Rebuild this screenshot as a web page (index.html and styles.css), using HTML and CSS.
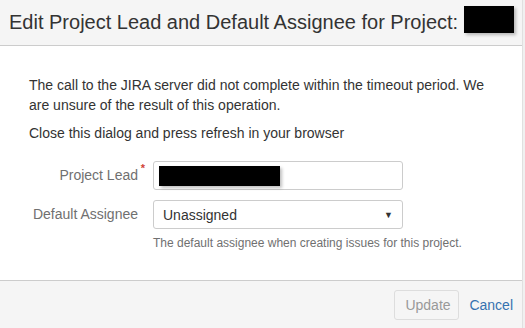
FILE: index.html
```html
<!DOCTYPE html>
<html>
<head>
    <title>Edit Project Lead and Default Assignee</title>
    <link rel="stylesheet" href="styles.css">
</head>
<body>

    <div class="dialog">
        <header class="dialog-header">
            <h2 class="dialog-title">Edit Project Lead and Default Assignee for Project: <span class="redacted title-redacted"></span></h2>
        </header>

        <section class="dialog-body">
            <p class="message">The call to the JIRA server did not complete within the timeout period. We are unsure of the result of this operation.</p>
            <p class="message">Close this dialog and press refresh in your browser</p>

            <form class="edit-form">
                <div class="field-group">
                    <label class="field-label">Project Lead<span class="required">*</span></label>
                    <div class="field-input text-input">
                        <span class="redacted lead-redacted"></span>
                    </div>
                </div>

                <div class="field-group">
                    <label class="field-label">Default Assignee</label>
                    <div class="field-control">
                        <div class="field-input select-input">
                            <span>Unassigned</span>
                            <span class="select-arrow">&#9660;</span>
                        </div>
                        <div class="field-description">The default assignee when creating issues for this project.</div>
                    </div>
                </div>
            </form>
        </section>

        <footer class="dialog-footer">
            <button class="update-button" disabled>Update</button>
            <a href="#" class="cancel-link">Cancel</a>
        </footer>
    </div>

</body>
</html>
```

FILE: styles.css
```css
/* Base Styles */
body {
    font-family: 'Liberation Sans', Arial, sans-serif;
    margin: 0;
    padding: 0;
    background-color: #f0f0f0;
    color: #333333;
    font-size: 14px;
}

/* Dialog */
.dialog {
    width: 522px;
    height: 328px;
    background: white;
    border-right: 1px solid #e0e0e0;
    display: flex;
    flex-direction: column;
}

.dialog-header {
    height: 45px;
    background: #f5f5f5;
    border-bottom: 1px solid #cccccc;
    padding: 0 9px;
    display: flex;
    align-items: center;
}

.dialog-title {
    margin: 0;
    font-size: 20px;
    font-weight: normal;
    white-space: nowrap;
    display: flex;
    align-items: center;
    gap: 6px;
}

.redacted {
    display: inline-block;
    background: black;
    box-shadow: 2px 2px 3px rgba(0,0,0,0.25);
}

.title-redacted {
    width: 50px;
    height: 27px;
    margin-top: -6px;
}

/* Body */
.dialog-body {
    flex: 1;
    padding: 29px 29px 0;
}

.message {
    margin: 0 0 8px;
    line-height: 20px;
}

/* Form */
.edit-form {
    margin-top: 18px;
}

.field-group {
    display: flex;
    align-items: flex-start;
    margin-bottom: 10px;
}

.field-label {
    width: 109px;
    text-align: right;
    color: #707070;
    padding-top: 6px;
    margin-right: 15px;
    position: relative;
}

.required {
    position: absolute;
    right: -7px;
    top: 1px;
    color: #d04437;
    font-size: 11px;
    font-weight: bold;
}

.field-input {
    width: 248px;
    height: 27px;
    border: 1px solid #cccccc;
    border-radius: 3px;
    background: white;
    display: flex;
    align-items: center;
    box-sizing: content-box;
}

.lead-redacted {
    width: 121px;
    height: 20px;
    margin-left: 5px;
}

.select-input {
    justify-content: space-between;
    padding: 0 9px;
    width: 230px;
    color: #333333;
}

.select-arrow {
    font-size: 9px;
    color: #333333;
}

.field-description {
    font-size: 12px;
    color: #707070;
    margin-top: 7px;
}

/* Footer */
.dialog-footer {
    height: 47px;
    background: #f5f5f5;
    border-top: 1px solid #cccccc;
    display: flex;
    align-items: center;
    justify-content: flex-end;
    padding: 0 9px;
    gap: 10px;
}

.update-button {
    font-family: inherit;
    font-size: 14px;
    color: #999999;
    background: #f5f5f5;
    border: 1px solid #dddddd;
    border-radius: 3px;
    padding: 0 10px;
    height: 30px;
    width: 65px;
}

.cancel-link {
    color: #3572b0;
    text-decoration: none;
}
```
